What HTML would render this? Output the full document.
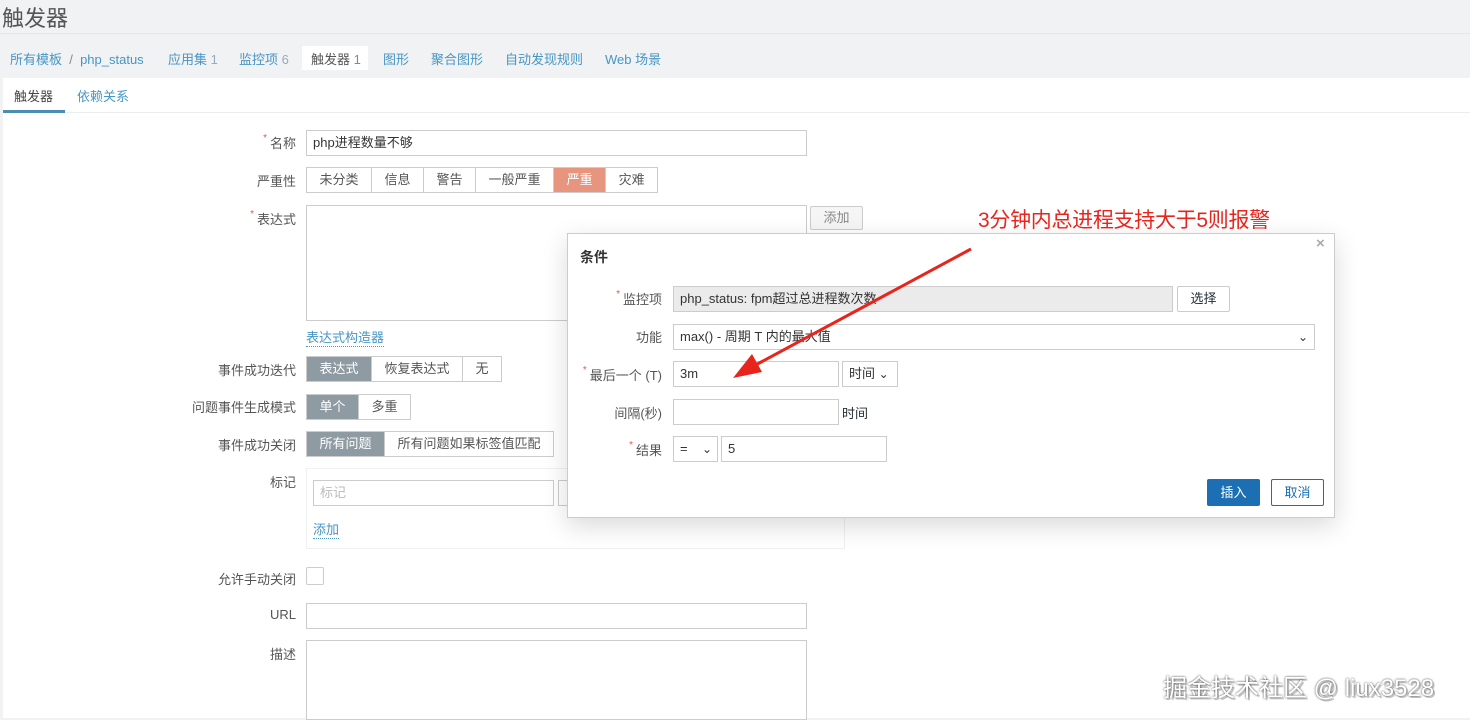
<!DOCTYPE html>
<html><head><meta charset="utf-8">
<style>
*{box-sizing:border-box;margin:0;padding:0}
body{width:1470px;height:718px;overflow:hidden;background:#f0f2f3;font-family:"Liberation Sans","Noto Sans CJK SC",sans-serif;font-size:13px;color:#1f2c33;position:relative}
.a{position:absolute;white-space:nowrap}
.lbl{position:absolute;color:#555;font-size:13px;text-align:right;white-space:nowrap}
.req{color:#e45959;font-size:10px;margin-right:3px;vertical-align:top}
.inp{position:absolute;border:1px solid #ccc;background:#fff;height:26px;font-size:13px;padding:0 6px;line-height:24px;color:#333}
.seg{position:absolute;display:flex;height:26px;border:1px solid #ccc;background:#fff}
.seg div{padding:0 12.5px;line-height:24px;color:#555;border-right:1px solid #ccc;font-size:13px}
.seg div:last-child{border-right:none}
.seg .on{background:#8f9ba3;color:#fff}
.nav{color:#4796c4;font-size:13px}
</style></head><body>
<div class="a" style="left:2px;top:1px;font-size:22px;color:#555">触发器</div>
<div class="a" style="left:0;top:33px;width:1470px;height:1px;background:#e4e6e8"></div>
<div class="a" style="left:302px;top:46px;width:66px;height:24px;background:#fff"></div>
<div class="a nav" style="left:10px;top:49px">所有模板 <span style="color:#888">&nbsp;/&nbsp;</span> php_status</div>
<div class="a nav" style="left:168px;top:49px">应用集 <span style="color:#9ab">1</span></div>
<div class="a nav" style="left:239px;top:49px">监控项 <span style="color:#9ab">6</span></div>
<div class="a" style="left:311px;top:49px;color:#555">触发器 <span style="color:#888">1</span></div>
<div class="a nav" style="left:383px;top:49px">图形</div>
<div class="a nav" style="left:431px;top:49px">聚合图形</div>
<div class="a nav" style="left:505px;top:49px">自动发现规则</div>
<div class="a nav" style="left:605px;top:49px">Web 场景</div>
<div class="a" style="left:3px;top:78px;width:1467px;height:640px;background:#fff"></div>
<div class="a" style="left:3px;top:112px;width:1467px;height:1px;background:#ebeef0"></div>
<div class="a" style="left:14px;top:86px;color:#444">触发器</div>
<div class="a" style="left:3px;top:110px;width:62px;height:3px;background:#4d8cb3"></div>
<div class="a nav" style="left:77px;top:86px">依赖关系</div>

<div class="lbl" style="right:1174px;top:133px"><span class="req">*</span>名称</div>
<div class="inp" style="left:306px;top:130px;width:501px">php进程数量不够</div>
<div class="lbl" style="right:1174px;top:171px">严重性</div>
<div class="seg" style="left:306px;top:167px"><div>未分类</div><div>信息</div><div>警告</div><div>一般严重</div><div style="background:#e8957f;color:#fff">严重</div><div>灾难</div></div>
<div class="lbl" style="right:1174px;top:209px"><span class="req">*</span>表达式</div>
<div class="inp" style="left:306px;top:205px;width:501px;height:116px"></div>
<div class="a" style="left:810px;top:206px;width:53px;height:24px;border:1px solid #ccc;background:#f5f5f5;color:#888;text-align:center;line-height:22px;border-radius:2px">添加</div>
<div class="a nav" style="left:306px;top:327px;border-bottom:1px dotted #4796c4">表达式构造器</div>
<div class="lbl" style="right:1174px;top:360px">事件成功迭代</div>
<div class="seg" style="left:306px;top:356px"><div class="on">表达式</div><div>恢复表达式</div><div>无</div></div>
<div class="lbl" style="right:1174px;top:397px">问题事件生成模式</div>
<div class="seg" style="left:306px;top:394px"><div class="on">单个</div><div>多重</div></div>
<div class="lbl" style="right:1174px;top:435px">事件成功关闭</div>
<div class="seg" style="left:306px;top:431px"><div class="on">所有问题</div><div>所有问题如果标签值匹配</div></div>
<div class="lbl" style="right:1174px;top:472px">标记</div>
<div class="a" style="left:306px;top:468px;width:539px;height:81px;border:1px solid #eef0f1"></div>
<div class="inp" style="left:313px;top:480px;width:241px;color:#bbb">标记</div>
<div class="inp" style="left:558px;top:480px;width:20px"></div>
<div class="a nav" style="left:313px;top:519px;border-bottom:1px dotted #4796c4">添加</div>
<div class="lbl" style="right:1174px;top:569px">允许手动关闭</div>
<div class="a" style="left:306px;top:567px;width:18px;height:18px;border:1px solid #ccc;border-radius:2px"></div>
<div class="lbl" style="right:1174px;top:607px">URL</div>
<div class="inp" style="left:306px;top:603px;width:501px"></div>
<div class="lbl" style="right:1174px;top:644px">描述</div>
<div class="inp" style="left:306px;top:640px;width:501px;height:80px"></div>

<div class="a" style="left:567px;top:233px;width:768px;height:285px;background:#fff;border:1px solid #ccc;box-shadow:0 8px 24px rgba(0,0,0,.15)"></div>
<div class="a" style="left:580px;top:247px;font-weight:bold;font-size:14px;color:#333">条件</div>
<div class="a" style="left:1316px;top:235px;color:#aaa;font-size:15px;font-weight:bold">×</div>
<div class="lbl" style="right:808px;top:289px"><span class="req">*</span>监控项</div>
<div class="inp" style="left:673px;top:286px;width:500px;background:#ebebeb">php_status: fpm超过总进程数次数</div>
<div class="a" style="left:1177px;top:286px;width:53px;height:26px;border:1px solid #ccc;background:#fff;text-align:center;line-height:24px;border-radius:2px">选择</div>
<div class="lbl" style="right:808px;top:327px">功能</div>
<div class="inp" style="left:673px;top:324px;width:642px">max() - 周期 T 内的最大值<span style="position:absolute;right:6px;top:0;font-size:12px">&#8964;</span></div>
<div class="lbl" style="right:808px;top:365px"><span class="req">*</span>最后一个 (T)</div>
<div class="inp" style="left:673px;top:361px;width:166px">3m</div>
<div class="inp" style="left:842px;top:361px;width:56px">时间 <span style="font-size:12px">&#8964;</span></div>
<div class="lbl" style="right:808px;top:403px">间隔(秒)</div>
<div class="inp" style="left:673px;top:399px;width:166px"></div>
<div class="a" style="left:842px;top:403px">时间</div>
<div class="lbl" style="right:808px;top:440px"><span class="req">*</span>结果</div>
<div class="inp" style="left:673px;top:436px;width:45px">= <span style="position:absolute;right:5px;top:0;font-size:12px">&#8964;</span></div>
<div class="inp" style="left:721px;top:436px;width:166px">5</div>
<div class="a" style="left:1207px;top:479px;width:53px;height:27px;background:#1b6fb2;color:#fff;text-align:center;line-height:27px;border-radius:2px">插入</div>
<div class="a" style="left:1271px;top:479px;width:53px;height:27px;border:1px solid #1b6fb2;color:#1b6fb2;text-align:center;line-height:25px;border-radius:2px;background:#fff">取消</div>

<div class="a" style="left:978px;top:204px;color:#e8251d;font-size:21px;letter-spacing:-0.3px">3分钟内总进程支持大于5则报警</div>
<svg class="a" style="left:0;top:0" width="1470" height="718"><line x1="971" y1="249" x2="750" y2="368" stroke="#e8251d" stroke-width="3"/><polygon points="733,378 752,354 762,372" fill="#e8251d"/></svg>
<div class="a" style="left:1165px;top:670px;font-size:24px;color:#ccc;letter-spacing:0">掘金技术社区 @ liux3528</div>
<div class="a" style="left:1163px;top:668px;font-size:24px;color:#fff;text-shadow:0 0 2px #333">掘金技术社区 @ liux3528</div>
</body></html>
